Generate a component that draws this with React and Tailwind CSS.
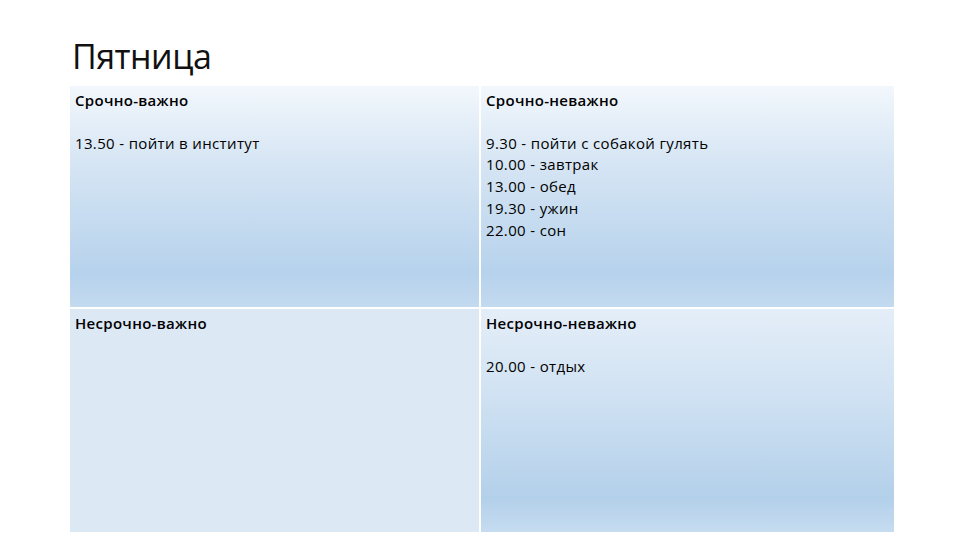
import React from 'react';

const cells = [
  {
    title: 'Срочно-важно',
    items: ['13.50 - пойти в институт'],
    bg: 'bg-[linear-gradient(to_bottom,#f2f7fc_0%,#d6e5f4_35%,#b6d2ec_85%,#c3daef_100%)]',
  },
  {
    title: 'Срочно-неважно',
    items: ['9.30 - пойти с собакой гулять', '10.00 - завтрак', '13.00 - обед', '19.30 - ужин', '22.00 - сон'],
    bg: 'bg-[linear-gradient(to_bottom,#f2f7fc_0%,#d6e5f4_35%,#b6d2ec_85%,#c3daef_100%)]',
  },
  {
    title: 'Несрочно-важно',
    items: [],
    bg: 'bg-[#dde8f5]',
  },
  {
    title: 'Несрочно-неважно',
    items: ['20.00 - отдых'],
    bg: 'bg-[linear-gradient(to_bottom,#e4eef8_0%,#d2e3f3_35%,#b3d0ea_85%,#c6dcf0_100%)]',
  },
];

const Cell = ({ cell }) => (
  <div className={`${cell.bg} px-[5px] pt-[4px] text-[15px] leading-[21.7px] text-black`}>
    <div className="font-semibold tracking-[0.3px]">{cell.title}</div>
    <div className="mt-[21px] tracking-[0.35px]">
      {cell.items.map((it) => (
        <div key={it}>{it}</div>
      ))}
    </div>
  </div>
);

export default function App() {
  return (
    <div
      className="w-[960px] h-[540px] bg-white pl-[70px] pr-[66px] pt-[36px] pb-[8px] flex flex-col"
      style={{ fontFamily: '"Open Sans", "Liberation Sans", sans-serif' }}
    >
      <h1 className="text-[34px] leading-[40px] h-[50px] pl-[2px] tracking-[-0.5px] text-[#111] font-normal">
        Пятница
      </h1>
      <div className="flex-1 grid grid-cols-[409px_413px] grid-rows-[221px_223px] gap-[2px]">
        {cells.map((c) => (
          <Cell key={c.title} cell={c} />
        ))}
      </div>
    </div>
  );
}
